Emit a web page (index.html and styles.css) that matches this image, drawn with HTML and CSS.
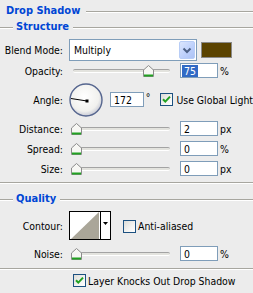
FILE: index.html
```html
<!DOCTYPE html>
<html>
<head>
<meta charset="utf-8">
<link rel="stylesheet" href="styles.css">
</head>
<body>
<div class="panel">
  <div class="title-row"><span class="title">Drop Shadow</span><span class="rule"></span></div>

  <div class="legend-row"><span class="rule lead"></span><span class="legend">Structure</span><span class="rule"></span></div>
  <div class="group structure">
    <div class="row blend-row">
      <span class="label">Blend Mode:</span>
      <div class="select">
        <span class="select-text">Multiply</span>
        <span class="select-btn"><svg width="16" height="18" viewBox="0 0 16 18"><path d="M4.5 7.5 L8 11 L11.5 7.5" fill="none" stroke="#4d6185" stroke-width="2"/></svg></span>
      </div>
      <span class="swatch"></span>
    </div>

    <div class="row slider-row">
      <span class="label">Opacity:</span>
      <div class="slider"><span class="track"></span><span class="thumb" style="left:74px"><svg width="11" height="12" viewBox="0 0 11 12"><path d="M5.5 0.5 L10.5 5 L10.5 11.5 L0.5 11.5 L0.5 5 Z" fill="#f7f7f4" stroke="#8c8c8c"/><rect x="1" y="9.5" width="9" height="2" fill="#21a121"/></svg></span></div>
      <span class="field"><span class="val sel">75</span></span><span class="unit">%</span>
    </div>

    <div class="row angle-row">
      <span class="label">Angle:</span>
      <span class="dial"><svg width="34" height="34" viewBox="0 0 34 34">
        <defs><radialGradient id="dg" cx="45%" cy="40%" r="60%"><stop offset="0" stop-color="#ffffff"/><stop offset="0.75" stop-color="#f1f1ee"/><stop offset="1" stop-color="#c9cbd6"/></radialGradient></defs>
        <circle cx="17" cy="17" r="16" fill="url(#dg)" stroke="#56668f" stroke-width="1.4"/>
        <line x1="2" y1="15.5" x2="18" y2="18" stroke="#000" stroke-width="1"/>
        <rect x="16.5" y="16.5" width="3" height="3" fill="#000"/>
      </svg></span>
      <span class="field wide"><span class="val">172</span></span><span class="deg">°</span>
      <span class="check on"><svg width="13" height="13" viewBox="0 0 13 13"><path d="M3 6.2 L5.3 8.6 L10 3.6" fill="none" stroke="#21a121" stroke-width="2"/></svg></span>
      <span class="check-label">Use Global Light</span>
    </div>

    <div class="row slider-row">
      <span class="label">Distance:</span>
      <div class="slider"><span class="track"></span><span class="thumb" style="left:2px"><svg width="11" height="12" viewBox="0 0 11 12"><path d="M5.5 0.5 L10.5 5 L10.5 11.5 L0.5 11.5 L0.5 5 Z" fill="#f7f7f4" stroke="#8c8c8c"/><rect x="1" y="9.5" width="9" height="2" fill="#21a121"/></svg></span></div>
      <span class="field"><span class="val">2</span></span><span class="unit">px</span>
    </div>

    <div class="row slider-row">
      <span class="label">Spread:</span>
      <div class="slider"><span class="track"></span><span class="thumb" style="left:2px"><svg width="11" height="12" viewBox="0 0 11 12"><path d="M5.5 0.5 L10.5 5 L10.5 11.5 L0.5 11.5 L0.5 5 Z" fill="#f7f7f4" stroke="#8c8c8c"/><rect x="1" y="9.5" width="9" height="2" fill="#21a121"/></svg></span></div>
      <span class="field"><span class="val">0</span></span><span class="unit">%</span>
    </div>

    <div class="row slider-row">
      <span class="label">Size:</span>
      <div class="slider"><span class="track"></span><span class="thumb" style="left:2px"><svg width="11" height="12" viewBox="0 0 11 12"><path d="M5.5 0.5 L10.5 5 L10.5 11.5 L0.5 11.5 L0.5 5 Z" fill="#f7f7f4" stroke="#8c8c8c"/><rect x="1" y="9.5" width="9" height="2" fill="#21a121"/></svg></span></div>
      <span class="field"><span class="val">0</span></span><span class="unit">px</span>
    </div>
  </div>

  <div class="legend-row quality-legend"><span class="rule lead"></span><span class="legend">Quality</span><span class="rule"></span></div>
  <div class="group quality">
    <div class="row contour-row">
      <span class="label">Contour:</span>
      <span class="contour">
        <svg width="42" height="29" viewBox="0 0 42 29">
          <rect x="0.5" y="0.5" width="41" height="28" fill="#fff" stroke="#000"/>
          <polygon points="2,28 30,1 30,28" fill="#aaa699"/>
          <line x1="31.5" y1="1" x2="31.5" y2="28" stroke="#000"/>
          <polygon points="34,11 39,11 36.5,14" fill="#000"/>
        </svg>
      </span>
      <span class="check off"></span>
      <span class="check-label tight">Anti-aliased</span>
    </div>
    <div class="row slider-row">
      <span class="label">Noise:</span>
      <div class="slider"><span class="track"></span><span class="thumb" style="left:2px"><svg width="11" height="12" viewBox="0 0 11 12"><path d="M5.5 0.5 L10.5 5 L10.5 11.5 L0.5 11.5 L0.5 5 Z" fill="#f7f7f4" stroke="#8c8c8c"/><rect x="1" y="9.5" width="9" height="2" fill="#21a121"/></svg></span></div>
      <span class="field"><span class="val">0</span></span><span class="unit">%</span>
    </div>
  </div>

  <div class="knock-row">
    <span class="check on"><svg width="13" height="13" viewBox="0 0 13 13"><path d="M3 6.2 L5.3 8.6 L10 3.6" fill="none" stroke="#21a121" stroke-width="2"/></svg></span>
    <span class="check-label tight">Layer Knocks Out Drop Shadow</span>
  </div>
</div>
</body>
</html>
```

FILE: styles.css
```css
html, body {
  margin: 0;
  padding: 0;
  background: #ececec;
}
body {
  font-family: "DejaVu Sans Condensed", "DejaVu Sans", "Liberation Sans", sans-serif;
  font-stretch: condensed;
  font-size: 10.4px;
  color: #000;
  width: 253px;
  height: 293px;
  overflow: hidden;
}
.panel {
  display: flex;
  flex-direction: column;
  width: 253px;
}
.title-row, .legend-row {
  display: flex;
  align-items: flex-start;
  height: 14px;
  line-height: 14px;
}
.title-row {
  margin-top: 4px;
  padding-left: 6px;
}
.legend-row {
  margin-top: 2px;
}
.title, .legend {
  font-size: 11px;
  font-weight: bold;
  color: #0046d5;
  white-space: nowrap;
}
.title {
  margin-right: 6px;
}
.legend {
  margin: 0 4px 0 3px;
}
.rule {
  flex: 1;
  height: 0;
  margin-top: 7px;
  border-top: 1px solid #a7a69f;
  border-bottom: 1px solid #ffffff;
}
.rule.lead {
  flex: 0 0 13px;
}
.group {
  display: flex;
  flex-direction: column;
  border-bottom: 1px solid #a7a69f;
  box-shadow: 0 1px 0 #ffffff;
}
.structure {
  padding-bottom: 6px;
}
.quality-legend {
  margin-top: 9px;
}
.quality {
  padding-bottom: 7px;
}
.row {
  display: flex;
  align-items: center;
  white-space: nowrap;
}
.label {
  flex: 0 0 63px;
  text-align: right;
  margin-right: 6px;
}
.blend-row {
  margin-top: 5px;
  height: 22px;
}
.select {
  box-sizing: border-box;
  width: 128px;
  height: 22px;
  border: 1px solid #7f9db9;
  background: #fff;
  display: flex;
  align-items: center;
  justify-content: space-between;
  padding: 1px;
}
.select-text {
  padding-left: 3px;
}
.select-btn {
  box-sizing: border-box;
  width: 16px;
  height: 18px;
  border: 1px solid #b8cdf6;
  border-radius: 2px;
  background: linear-gradient(135deg, #dbe6fd 0%, #bccffb 60%, #adc3f5 100%);
  display: flex;
}
.select-btn svg {
  margin: -1px;
}
.swatch {
  box-sizing: border-box;
  width: 31px;
  height: 16px;
  margin-left: 4px;
  border: 1px solid #8a8a8a;
  background: #5b4300;
}
.slider-row {
  height: 15px;
  margin-top: 5px;
}
.blend-row + .slider-row {
  margin-top: 2px;
}
.slider {
  position: relative;
  width: 107px;
  height: 15px;
  margin-right: 4px;
}
.track {
  display: block;
  box-sizing: border-box;
  margin: 6px 0 0 4px;
  width: 97px;
  height: 4px;
  border-radius: 2px;
  border-top: 1px solid #a3a3a3;
  border-bottom: 1px solid #ffffff;
  background: #e3e3de;
}
.thumb {
  position: absolute;
  top: 2px;
  width: 11px;
  height: 12px;
}
.thumb svg {
  display: block;
}
.field {
  box-sizing: border-box;
  width: 38px;
  height: 15px;
  border: 1px solid #7f9db9;
  background: #fff;
  padding: 1px 0 0 1px;
  line-height: 12px;
  display: flex;
}
.field.wide {
  width: 42px;
  margin-left: 7px;
}
.val {
  padding: 0 2px;
  height: 12px;
}
.val.sel {
  background: #316ac5;
  color: #fff;
}
.unit {
  margin-left: 2px;
}
.angle-row {
  margin-top: 5px;
  height: 33px;
}
.dial {
  width: 34px;
  height: 34px;
  display: flex;
}
.field.wide + .deg {
  margin-left: 2px;
  align-self: flex-start;
  margin-top: 9px;
  line-height: 11px;
}
.check {
  box-sizing: border-box;
  width: 13px;
  height: 13px;
  border: 1px solid #1c5180;
  background: linear-gradient(135deg, #dcdcd7 0%, #f4f4f2 60%, #ffffff 100%);
  display: flex;
}
.check svg {
  margin: -1px;
}
.angle-row .check {
  margin-left: 10px;
}
.check-label {
  margin-left: 3px;
}
.check-label.tight {
  margin-left: 2px;
}
.contour-row {
  margin-top: 5px;
  height: 29px;
}
.contour {
  display: flex;
  width: 42px;
  height: 29px;
}
.contour-row .check {
  margin-left: 12px;
  margin-top: 1px;
}
.contour-row + .slider-row {
  margin-top: 6px;
}
.knock-row {
  display: flex;
  align-items: center;
  height: 13px;
  margin-top: 5px;
  padding-left: 73px;
  white-space: nowrap;
}
```
